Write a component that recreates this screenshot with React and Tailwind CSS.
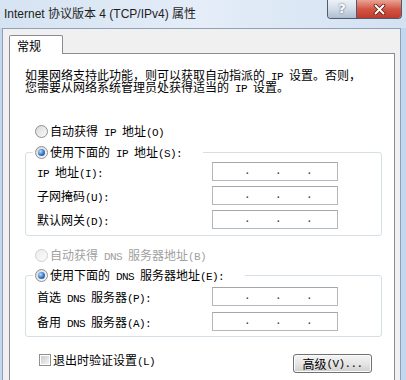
import React from 'react';

// SimSun-style run: latin in a narrow mono, CJK in Noto
function T({ children }) {
    return children.split(/([ -~]+)/).map((part, i) =>
        /[ -~]/.test(part) ? (
            <span key={i} className="font-['Liberation_Mono',monospace] text-[11px] leading-[0px] tracking-[-0.6px] whitespace-pre">
                {part}
            </span>
        ) : (
            part
        )
    );
}

function Radio({ checked, disabled }) {
    return (
        <span
            className={
                disabled
                    ? 'flex h-[13px] w-[13px] shrink-0 items-center justify-center rounded-full border border-[#cfcfcf] bg-linear-to-br from-[#ececec] to-[#fbfbfb]'
                    : 'flex h-[13px] w-[13px] shrink-0 items-center justify-center rounded-full border border-[#8e8f8f] bg-linear-to-br from-[#d9d9d9] to-[#fafafa]'
            }
        >
            {checked && (
                <span className="h-[7px] w-[7px] rounded-full bg-[radial-gradient(circle_at_35%_35%,#b5dcff,#2d73c2_55%,#144a8c)]" />
            )}
        </span>
    );
}

function IpBox() {
    return (
        <div className="flex h-[19px] w-[126px] border border-[#b4b7bc] border-t-[#a3a6ab] bg-white pl-[31px] text-[#333] leading-[17px]">
            <span className="w-[32px] font-['Liberation_Mono',monospace] text-[11px]">.</span>
            <span className="w-[32px] font-['Liberation_Mono',monospace] text-[11px]">.</span>
            <span className="w-[32px] font-['Liberation_Mono',monospace] text-[11px]">.</span>
        </div>
    );
}

function Field({ label }) {
    return (
        <div className="flex h-[19px] items-center">
            <span className="w-[175px] leading-[16px]">
                <T>{label}</T>
            </span>
            <IpBox />
        </div>
    );
}

export default function App() {
    return (
        <div className="h-[380px] w-[406px] overflow-hidden bg-[#c3d7ee] font-['Noto_Sans_CJK_SC',sans-serif] text-[12px] text-black">
            {/* Title bar */}
            <div className="flex h-[28px] bg-linear-to-r from-[#d6e3f2] via-[#e4edf8] to-[#d3e1f1] pr-[4px]">
                <div className="flex-1 self-center pl-[4px] font-['Liberation_Sans','Noto_Sans_CJK_SC',sans-serif] text-[12px] text-[#1e1e1e]">
                    Internet 协议版本 4 (TCP/IPv4) 属性
                </div>
                <div className="flex h-[19px] self-start overflow-hidden rounded-b-[4px] border border-t-0 border-[#4d5b6e]">
                    <div className="flex w-[29px] items-center justify-center border-r border-[#4d5b6e] bg-linear-to-b from-[#eef2f7] via-[#d3dce7] to-[#aebdcf] font-['DejaVu_Sans',sans-serif] text-[13px] font-bold text-white [text-shadow:0_0_2px_#33445a]">
                        ?
                    </div>
                    <div className="flex w-[44px] items-center justify-center bg-linear-to-b from-[#e9a394] via-[#d25644] to-[#c0392b]">
                        <svg width="13" height="11" viewBox="0 0 13 11">
                            <path d="M2.5 1.5 L10.5 9.5 M10.5 1.5 L2.5 9.5" stroke="#5b1d14" strokeWidth="3.6" strokeLinecap="round" />
                            <path d="M2.5 1.5 L10.5 9.5 M10.5 1.5 L2.5 9.5" stroke="#ffffff" strokeWidth="2" strokeLinecap="round" />
                        </svg>
                    </div>
                </div>
            </div>

            {/* Client area */}
            <div className="ml-[2px] h-[352px] w-[399px] border-x border-t border-[#8fa1b6] bg-[#f0f0f0] pl-[6px] pt-[6px]">
                {/* Tab */}
                <div className="relative z-10 flex h-[19px] w-[54px] items-center rounded-t-[2px] border-x border-t border-[#898c95] bg-white pl-[7px] pt-[1px]">
                    常规
                </div>

                {/* Panel */}
                <div className="-mt-px h-[330px] w-[386px] border border-[#898c95] bg-white">
                    <p className="ml-[15px] mt-[15px] leading-[12px]">
                        <T>如果网络支持此功能，则可以获取自动指派的 IP 设置。否则，</T>
                        <br />
                        <T>您需要从网络系统管理员处获得适当的 IP 设置。</T>
                    </p>

                    <div className="ml-[25px] mt-[30px] flex h-[16px] items-center gap-[2px]">
                        <Radio />
                        <span className="leading-[16px]">
                            <T>自动获得 IP 地址(O)</T>
                        </span>
                    </div>

                    <fieldset className="ml-[15px] mt-[5px] w-[357px] rounded-[3px] border border-[#d5dfe5] pb-[6px] pl-[11px] pt-[2px]">
                        <legend className="ml-[-4px] w-[170px]">
                            <div className="flex h-[16px] items-center gap-[2px] pl-[2px]">
                                <Radio checked />
                                <span className="leading-[16px]">
                                    <T>使用下面的 IP 地址(S):</T>
                                </span>
                            </div>
                        </legend>
                        <div className="flex flex-col gap-[5px]">
                            <Field label="IP 地址(I):" />
                            <Field label="子网掩码(U):" />
                            <Field label="默认网关(D):" />
                        </div>
                    </fieldset>

                    <div className="ml-[25px] mt-[11px] flex h-[16px] items-center gap-[2px] text-[#a0a0a0]">
                        <Radio disabled />
                        <span className="leading-[16px]">
                            <T>自动获得 DNS 服务器地址(B)</T>
                        </span>
                    </div>

                    <fieldset className="ml-[15px] mt-[4px] w-[357px] rounded-[3px] border border-[#d5dfe5] pb-[5px] pl-[11px] pt-[4px]">
                        <legend className="ml-[-4px] w-[212px]">
                            <div className="flex h-[16px] items-center gap-[2px] pl-[2px]">
                                <Radio checked />
                                <span className="leading-[16px]">
                                    <T>使用下面的 DNS 服务器地址(E):</T>
                                </span>
                            </div>
                        </legend>
                        <div className="flex flex-col gap-[6px]">
                            <Field label="首选 DNS 服务器(P):" />
                            <Field label="备用 DNS 服务器(A):" />
                        </div>
                    </fieldset>

                    <div className="mt-[15px] flex items-start">
                        <div className="ml-[29px] flex h-[16px] items-center gap-[2px]">
                            <span className="flex h-[12px] w-[12px] items-center justify-center border border-[#8f8f8f] bg-white">
                                <span className="h-[8px] w-[8px] bg-linear-to-br from-[#cbcbcb] to-[#f4f4f4]" />
                            </span>
                            <span className="leading-[16px]">
                                <T>退出时验证设置(L)</T>
                            </span>
                        </div>
                        <button className="ml-auto mr-[22px] mt-[2px] flex h-[19px] w-[79px] items-center justify-center rounded-[3px] border border-[#707070] bg-linear-to-b from-[#f4f4f4] via-[#e6e6e6] to-[#cfcfcf] leading-[16px] shadow-[inset_0_0_0_1px_#fcfcfc]">
                            <T>高级(V)...</T>
                        </button>
                    </div>
                </div>
            </div>
        </div>
    );
}
